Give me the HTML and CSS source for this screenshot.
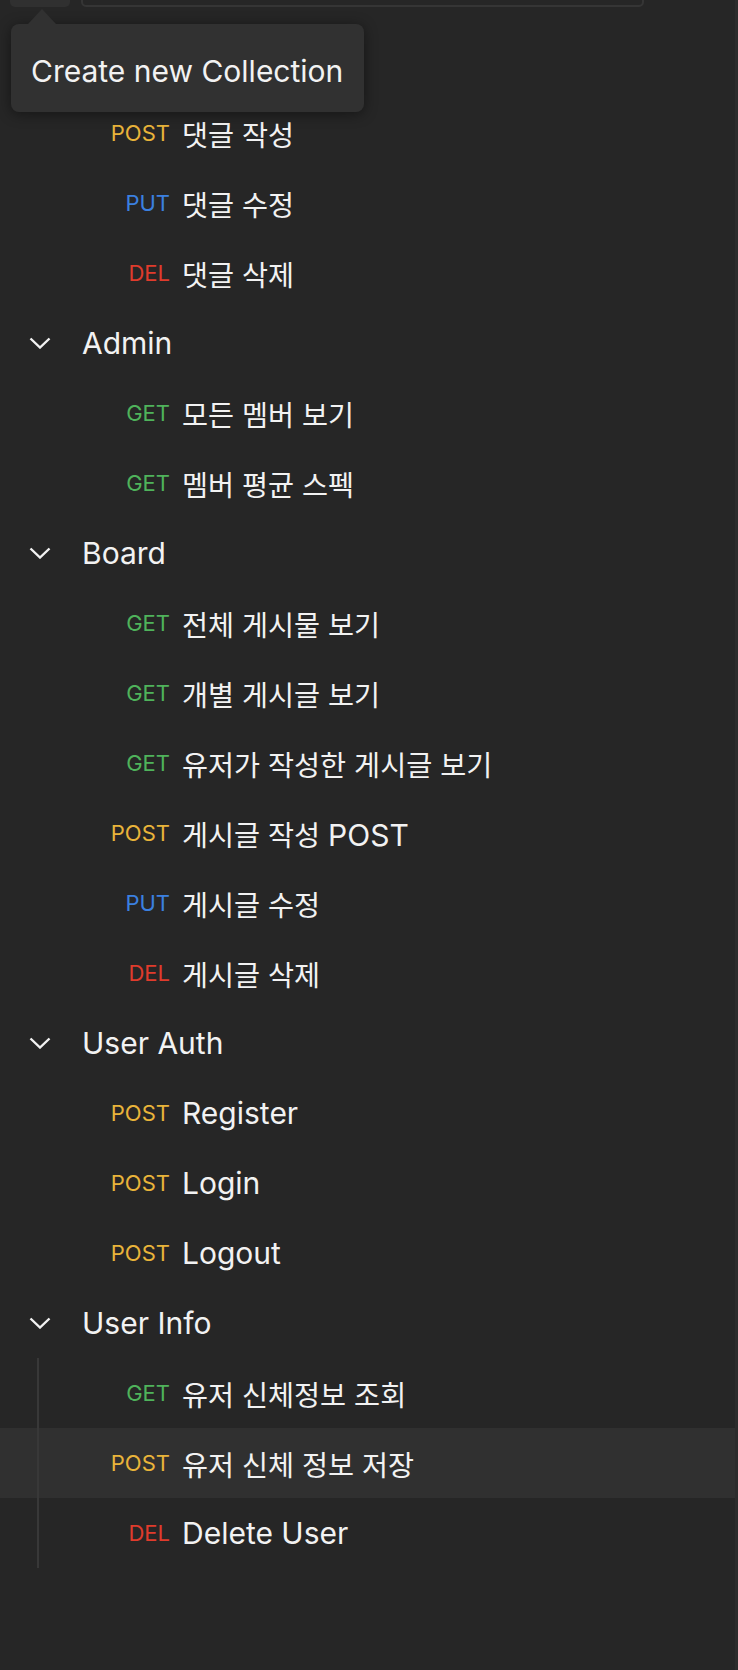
FILE: index.html
```html
<!DOCTYPE html>
<html lang="ko">
<head>
    <meta charset="UTF-8">
    <meta name="viewport" content="width=device-width, initial-scale=1.0">
    <title>Collections</title>
    <link rel="stylesheet" href="styles.css">
</head>
<body>
    <div class="panel">
        <div class="toolbar">
            <div class="new-btn"></div>
            <div class="search"></div>
        </div>

        <div class="tree">
            <div class="folder">
                <!-- folder header sits under the tooltip -->
                <div class="row folder-row">
                    <svg class="caret" viewBox="0 0 22 12"><path d="M1.5 1.5 L11 10.5 L20.5 1.5"/></svg>
                </div>
                <div class="row req"><span class="method post">POST</span><span class="name">댓글 작성</span></div>
                <div class="row req"><span class="method put">PUT</span><span class="name">댓글 수정</span></div>
                <div class="row req"><span class="method del">DEL</span><span class="name">댓글 삭제</span></div>
            </div>

            <div class="folder">
                <div class="row folder-row">
                    <svg class="caret" viewBox="0 0 22 12"><path d="M1.5 1.5 L11 10.5 L20.5 1.5"/></svg>
                    <span class="name" lang="en">Admin</span>
                </div>
                <div class="row req"><span class="method get">GET</span><span class="name">모든 멤버 보기</span></div>
                <div class="row req"><span class="method get">GET</span><span class="name">멤버 평균 스펙</span></div>
            </div>

            <div class="folder">
                <div class="row folder-row">
                    <svg class="caret" viewBox="0 0 22 12"><path d="M1.5 1.5 L11 10.5 L20.5 1.5"/></svg>
                    <span class="name" lang="en">Board</span>
                </div>
                <div class="row req"><span class="method get">GET</span><span class="name">전체 게시물 보기</span></div>
                <div class="row req"><span class="method get">GET</span><span class="name">개별 게시글 보기</span></div>
                <div class="row req"><span class="method get">GET</span><span class="name">유저가 작성한 게시글 보기</span></div>
                <div class="row req"><span class="method post">POST</span><span class="name">게시글 작성 <span lang="en">POST</span></span></div>
                <div class="row req"><span class="method put">PUT</span><span class="name">게시글 수정</span></div>
                <div class="row req"><span class="method del">DEL</span><span class="name">게시글 삭제</span></div>
            </div>

            <div class="folder">
                <div class="row folder-row">
                    <svg class="caret" viewBox="0 0 22 12"><path d="M1.5 1.5 L11 10.5 L20.5 1.5"/></svg>
                    <span class="name" lang="en">User Auth</span>
                </div>
                <div class="row req"><span class="method post">POST</span><span class="name" lang="en">Register</span></div>
                <div class="row req"><span class="method post">POST</span><span class="name" lang="en">Login</span></div>
                <div class="row req"><span class="method post">POST</span><span class="name" lang="en">Logout</span></div>
            </div>

            <div class="folder">
                <div class="row folder-row">
                    <svg class="caret" viewBox="0 0 22 12"><path d="M1.5 1.5 L11 10.5 L20.5 1.5"/></svg>
                    <span class="name" lang="en">User Info</span>
                </div>
                <div class="children guided">
                    <div class="row req"><span class="method get">GET</span><span class="name">유저 신체정보 조회</span></div>
                    <div class="row req hover"><span class="method post">POST</span><span class="name">유저 신체 정보 저장</span></div>
                    <div class="row req"><span class="method del">DEL</span><span class="name" lang="en">Delete User</span></div>
                </div>
            </div>
        </div>

        <div class="tooltip" lang="en">Create new Collection</div>
    </div>
</body>
</html>
```

FILE: styles.css
```css
body {
    margin: 0;
    padding: 0;
    background-color: #262626;
    color: #f2f2f2;
    font-family: Inter, "Noto Sans CJK KR", sans-serif;
    height: 1670px;
    overflow: hidden;
}

.panel {
    position: relative;
    display: flow-root;
    height: 100%;
    border-right: 3px solid #2c2c2c;
}

/* header is scrolled mostly out of view */
.toolbar {
    display: flex;
    gap: 11px;
    height: 40px;
    margin-top: -33px;
    padding: 0 91px 0 10px;
}

.new-btn {
    width: 60px;
    background-color: #303030;
    border-radius: 5px;
}

.search {
    flex: 1;
    border: 2px solid #353535;
    border-radius: 5px;
}

.tree {
    margin-top: 21px;
}

.row {
    display: flex;
    align-items: center;
    height: 70px;
    font-size: 28.3px;
}

.name:lang(en),
.name :lang(en) {
    font-size: 30px;
}

.folder-row .caret {
    width: 22px;
    height: 12px;
    margin-left: 29px;
    margin-right: 31px;
    fill: none;
    stroke: #f2f2f2;
    stroke-width: 2.4;
}

.req .method {
    width: 88px;
    margin-left: 82px;
    margin-right: 12px;
    text-align: right;
    font-size: 22px;
}

.method.get { color: #4fb35b; }
.method.post { color: #e9b43a; }
.method.put { color: #3b80e0; }
.method.del { color: #e03b2c; }

.row.hover {
    background-color: #303030;
}

.children.guided {
    position: relative;
}

.children.guided::before {
    content: "";
    position: absolute;
    left: 37px;
    top: 0;
    bottom: 0;
    width: 2px;
    background-color: #383838;
}

.tooltip {
    position: absolute;
    left: 11px;
    top: 24px;
    width: 353px;
    height: 88px;
    box-sizing: border-box;
    padding: 29px 0 0 20px;
    background-color: #313131;
    border-radius: 8px;
    box-shadow: 0 2px 14px rgba(0, 0, 0, 0.45);
    font-size: 30px;
    line-height: 1.2;
    color: #f2f2f2;
}

.tooltip::before {
    content: "";
    position: absolute;
    left: 17px;
    top: -15px;
    border-left: 14px solid transparent;
    border-right: 14px solid transparent;
    border-bottom: 15px solid #313131;
}
```
